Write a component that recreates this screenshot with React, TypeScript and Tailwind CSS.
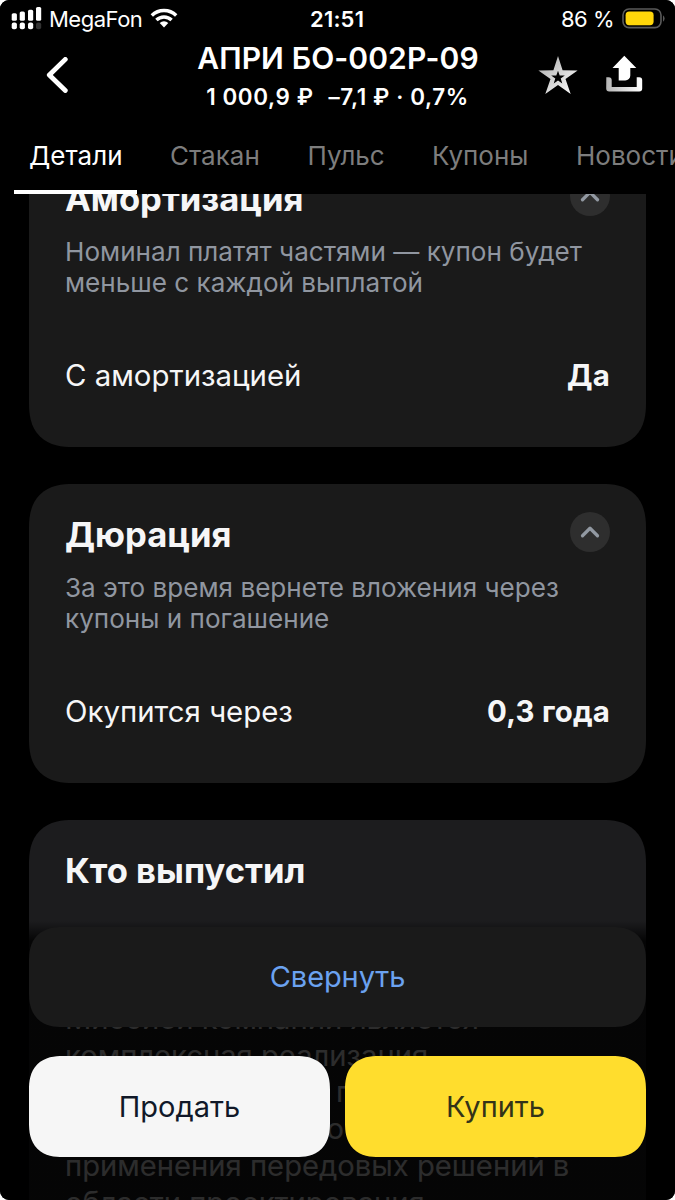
import React from "react";
import { ChevronUp } from "lucide-react";

const tabs = [
  { name: "Детали", className: "w-[93px]" },
  { name: "Стакан", className: "w-[89.5px]" },
  { name: "Пульс", className: "w-[76.5px]" },
  { name: "Купоны", className: "w-[96px]" },
  { name: "Новости", className: "w-[110px]" },
];

const about = [
  "Миссией компании является",
  "комплексная реализация",
  "девелоперских на п",
  "качества жизни и о",
  "применения передовых решений в",
  "области проектирования",
];

function StatusBar() {
  return (
    <div className="h-[37px] flex items-center justify-between pl-[11px] pr-[9px] text-[22px] leading-none relative">
      <div className="flex items-center">
        <svg width="31" height="24" viewBox="0 0 31 24" className="mr-[7px]">
          <g fill="#fff">
            <rect x="0.7" y="6.2" width="5.2" height="7.6" rx="1.6" />
            <rect x="8.7" y="4.5" width="5.2" height="9.3" rx="1.6" />
            <rect x="17" y="2.8" width="5.2" height="11" rx="1.6" />
            <rect x="25" y="0" width="5.2" height="13.8" rx="1.6" />
            <rect x="0.7" y="15.6" width="5.2" height="6.6" rx="2" />
            <rect x="8.7" y="15.6" width="5.2" height="6.6" rx="2" />
            <rect x="17" y="15.6" width="5.2" height="6.6" rx="2" />
            <rect x="25" y="15.6" width="5.2" height="6.6" rx="2" fill="#333" />
          </g>
        </svg>
        <span className="w-[93px] whitespace-nowrap tracking-[-0.5px]">MegaFon</span>
        <svg width="28" height="20" viewBox="0 0 28 20" className="ml-[8px] -mt-[2px]">
          <g fill="none" stroke="#fff" strokeWidth="3.4">
            <path d="M1.8 7.5a17.4 17.4 0 0 1 24.4 0" />
            <path d="M6.4 12a11 11 0 0 1 15.2 0" />
          </g>
          <path d="M14 19.4l-4.3-4.5a6.4 6.4 0 0 1 8.6 0z" fill="#fff" />
        </svg>
      </div>
      <span className="absolute left-[310px] font-semibold tracking-[0.2px]">21:51</span>
      <div className="flex items-center">
        <span className="whitespace-nowrap tracking-[-0.5px]">86 %</span>
        <svg width="44" height="21" viewBox="0 0 44 21" className="ml-[8px] -mt-px">
          <rect x="1" y="1" width="38" height="18.6" rx="6" fill="none" stroke="#5a5a5a" strokeWidth="1.6" />
          <rect x="3.6" y="3.6" width="28" height="13.6" rx="3.6" fill="#ffd60a" />
          <path d="M41 7.3a4 4 0 0 1 0 6.4z" fill="#5a5a5a" />
        </svg>
      </div>
    </div>
  );
}

function NavBar() {
  return (
    <div className="h-[82px] flex relative">
      <svg width="24" height="36" viewBox="0 0 24 36" className="ml-[45px] mt-[20px]">
        <path d="M20.3 2.4L4.3 18l16 15.5" fill="none" stroke="#fff" strokeWidth="4.8" strokeLinecap="round" strokeLinejoin="round" />
      </svg>
      <div className="w-[300px] ml-[119px] flex flex-col items-center whitespace-nowrap">
        <h1 className="text-[30px] leading-[36px] mt-[3px] font-semibold tracking-[0.1px]">АПРИ БО-002Р-09</h1>
        <p className="text-[22.4px] leading-[28px] mt-[7px] font-semibold tracking-[0.6px] flex gap-[15px] pr-px">
          <span>1 000,9 ₽</span>
          <span>–7,1 ₽ · 0,7%</span>
        </p>
      </div>
      <svg width="40" height="40" viewBox="0 0 40 40" className="ml-[50px] mt-[18px]">
        <defs>
          <linearGradient id="star" x1="0" y1="0" x2="1" y2="1">
            <stop offset="0" stopColor="#a9a9a9" />
            <stop offset="1" stopColor="#fff" />
          </linearGradient>
        </defs>
        <path
          fill="url(#star)"
          fillRule="evenodd"
          d="M20 1l4.6 14.3 15 .2-12.1 8.6 5.2 14.9L20 30 7.3 39l5.2-14.9L.4 15.5l15-.2zM20 15.8l-1.7 4.7h-5.1l4.1 3.1-1.6 5L20 25.6l4.3 3-1.6-5 4.1-3.1h-5.1z"
        />
      </svg>
      <svg width="37" height="38" viewBox="0 0 37 38" className="ml-[28px] mt-[18px]">
        <defs>
          <linearGradient id="tray" x1="0" y1="0" x2="1" y2="0">
            <stop offset="0" stopColor="#b5b5b5" />
            <stop offset="1" stopColor="#fff" />
          </linearGradient>
        </defs>
        <path d="M18.3.8l12 12.1h-6v7.6a5 5 0 0 1-5 5h-6.6V12.9H6.5z" fill="#fff" />
        <path d="M.3 22.3h2.4a3 3 0 0 1 3 3V32h25v-9.7h2.5a3 3 0 0 1 3 3v8.1a3 3 0 0 1-3 3h-30a3 3 0 0 1-3-3z" fill="url(#tray)" />
      </svg>
    </div>
  );
}

type InfoCardProps = {
  title: string;
  text: string[];
  label: string;
  value: string;
};

function InfoCard({ title, text, label, value }: InfoCardProps) {
  return (
    <section className="h-[299px] shrink-0 bg-[#1a1a1a] rounded-[44px] [corner-shape:superellipse(1.3)] px-[36px] pt-[29px]">
      <div className="flex justify-between">
        <h2 className="text-[34.6px] leading-[42px] font-bold text-[#f6f6f7]">{title}</h2>
        <button className="size-[40px] -mt-px rounded-full bg-[#2e2e2e] flex items-center justify-center">
          <ChevronUp className="size-[30px] text-[#9299a2]" strokeWidth={2.6} />
        </button>
      </div>
      <div className="mt-[16.5px] text-[26.1px] leading-[31.5px] text-[#9096a0] whitespace-nowrap">
        {text.map((line) => (
          <p key={line}>{line}</p>
        ))}
      </div>
      <div className="mt-[57px] flex justify-between text-[29.4px] leading-[40px] text-[#f6f6f7]">
        <span>{label}</span>
        <span className="font-bold tracking-[0.2px]">{value}</span>
      </div>
    </section>
  );
}

export default function App() {
  return (
    <div className="w-[675px] h-[1200px] bg-white">
      <div className="h-full rounded-[9px] overflow-hidden relative flex flex-col bg-black text-white font-['Inter',sans-serif]">
        {/* Header */}
        <header className="h-[194px] shrink-0 relative z-10 bg-black">
          <StatusBar />
          <NavBar />
          <nav className="h-[75px] flex gap-[48px] pl-[29px] pt-[19px] relative text-[26px] leading-[36px] text-[#7d7d7d] whitespace-nowrap overflow-hidden">
            {tabs.map((tab, i) => (
              <span key={tab.name} className={`shrink-0 ${tab.className} ${i === 0 ? "text-white" : ""}`}>
                {tab.name}
              </span>
            ))}
            <span className="absolute left-[14px] bottom-0 w-[123px] h-[4px] bg-white" />
          </nav>
        </header>

        {/* Scrolled content */}
        <main className="flex-1 min-h-0 overflow-hidden px-[29px]">
          <div className="-mt-[46px] flex flex-col gap-[37px]">
            <InfoCard
              title="Амортизация"
              text={["Номинал платят частями — купон будет", "меньше с каждой выплатой"]}
              label="С амортизацией"
              value="Да"
            />
            <InfoCard
              title="Дюрация"
              text={["За это время вернете вложения через", "купоны и погашение"]}
              label="Окупится через"
              value="0,3 года"
            />
            <section className="h-[440px] shrink-0 bg-[#1c1c1e] rounded-t-[44px] [corner-shape:superellipse(1.3)] px-[36px] pt-[29px]">
              <h2 className="text-[34.6px] leading-[42px] font-bold text-[#f6f6f7]">Кто выпустил</h2>
              <div className="mt-[110px] text-[29.2px] leading-[36.7px] text-[#f6f6f7] whitespace-nowrap">
                {about.map((line) => (
                  <p key={line}>{line}</p>
                ))}
              </div>
            </section>
          </div>
        </main>

        {/* Bottom panel */}
        <footer className="absolute inset-x-0 bottom-0 h-[279px] px-[29px] pt-[6px] bg-linear-to-b from-black/0 via-black/82 via-[20px] to-black/82">
          <button className="w-full h-[100px] rounded-[34px] [corner-shape:superellipse(1.3)] bg-[#1a1a1a] text-[29px] tracking-[-0.1px] text-[#6ba2f0]">Свернуть</button>
          <div className="mt-[29px] flex gap-[15px] text-[29px]">
            <button className="flex-1 h-[101px] rounded-[34px] [corner-shape:superellipse(1.3)] bg-[#f6f6f6] text-[#101828]">Продать</button>
            <button className="flex-1 h-[101px] rounded-[34px] [corner-shape:superellipse(1.3)] bg-[#ffdd2d] text-[#333318]">Купить</button>
          </div>
        </footer>
      </div>
    </div>
  );
}
